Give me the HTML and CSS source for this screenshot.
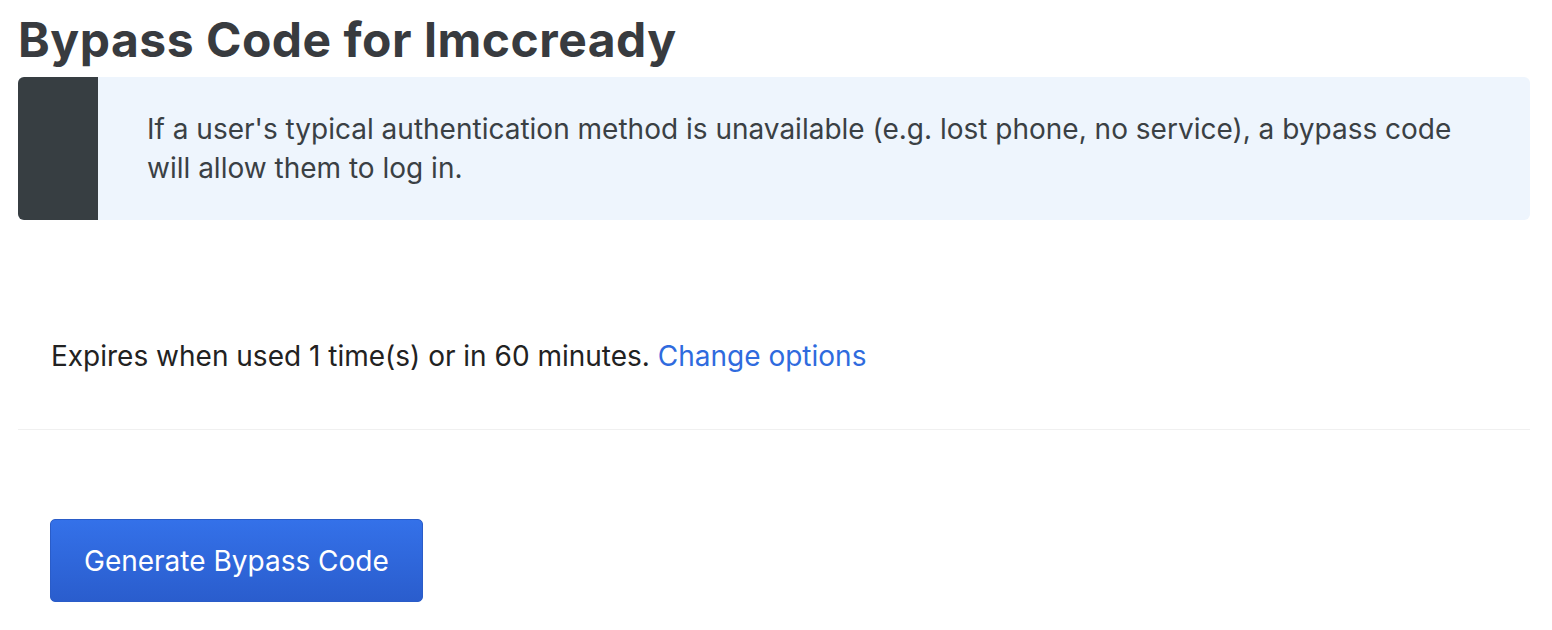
FILE: index.html
```html
<!DOCTYPE html>
<html lang="en">
<head>
    <meta charset="UTF-8">
    <meta name="viewport" content="width=device-width, initial-scale=1.0">
    <title>Bypass Code</title>
    <link rel="stylesheet" href="styles.css">
</head>
<body>
    <div class="page">
        <h1 class="page-title">Bypass Code for lmccready</h1>

        <div class="callout">
            <div class="callout-bar"></div>
            <p class="callout-text">If a user's typical authentication method is unavailable (e.g. lost phone, no service), a bypass code will allow them to log in.</p>
        </div>

        <div class="options">
            <p>Expires when used 1 time(s) or in 60 minutes. <a href="#">Change options</a></p>
        </div>

        <div class="actions">
            <button type="button" class="btn-primary">Generate Bypass Code</button>
        </div>
    </div>
</body>
</html>
```

FILE: styles.css
```css
body {
    margin: 0;
    padding: 0;
    font-family: Inter, "Noto Sans", sans-serif;
    color: #3a4044;
    background: #fff;
}

.page {
    padding: 0 22px 0 18px;
}

.page-title {
    margin: 10px 0 8px;
    font-size: 48px;
    font-weight: 700;
    letter-spacing: 0.5px;
    color: #383b3f;
}

/* info box */
.callout {
    display: flex;
    background-color: #eef5fd;
    border-radius: 6px;
    overflow: hidden;
}
.callout-bar {
    width: 80px;
    flex-shrink: 0;
    background-color: #373e42;
}
.callout-text {
    margin: 0;
    padding: 33px 50px 32px 49px;
    font-size: 28px;
    line-height: 39px;
}

.options {
    padding: 119px 0 56px 33px;
    border-bottom: 1px solid #f0f0f0;
}
.options p {
    margin: 0;
    font-size: 28px;
    line-height: 34px;
    color: #222;
}
.options a {
    color: #2f6bde;
    text-decoration: none;
}

.actions {
    padding: 89px 0 0 32px;
}
.btn-primary {
    height: 83px;
    padding: 0 33px;
    font-family: Inter, "Noto Sans", sans-serif;
    font-size: 28px;
    color: #fff;
    background: linear-gradient(#3471e9, #2a5dcd);
    border: 1px solid #2a5cc8;
    border-radius: 5px;
    cursor: pointer;
}
```
